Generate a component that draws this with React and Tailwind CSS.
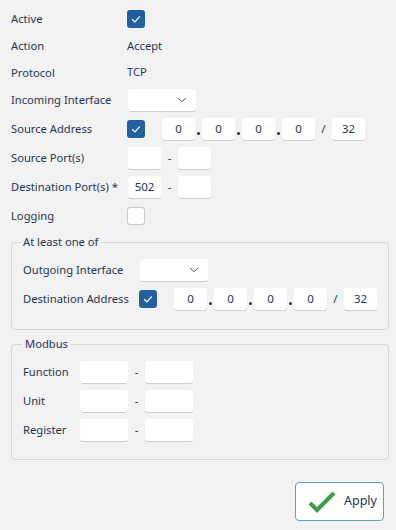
import React from "react";

const font = { fontFamily: '"Noto Sans", "Open Sans", sans-serif' };

function Check({ checked }) {
  return (
    <div
      className={
        "w-[18px] h-[18px] rounded-[3px] flex items-center justify-center shrink-0 " +
        (checked ? "bg-[#22609d]" : "bg-white border border-[#c8c8c8]")
      }
    >
      {checked && (
        <svg width="18" height="18" viewBox="0 0 18 18">
          <path d="M5.2 9.3 L7.9 11.9 L12.9 6.4" fill="none" stroke="#ffffff" strokeWidth="1.2" />
        </svg>
      )}
    </div>
  );
}

function Box({ w = "w-[33px]", children }) {
  return (
    <div
      className={
        w +
        " h-[22px] bg-white rounded-[3px] shadow-[0_1px_0_#cfcfcf] flex items-center justify-center text-[11.5px] text-[#1e3553] shrink-0"
      }
    >
      {children}
    </div>
  );
}

function Select() {
  return (
    <div className="w-[68px] h-[22px] bg-white rounded-[3px] shadow-[0_1px_0_#cfcfcf] flex items-center justify-end pr-[9px] shrink-0">
      <svg width="10" height="6" viewBox="0 0 10 6">
        <path d="M1 1 L5 4.6 L9 1" fill="none" stroke="#44546a" strokeWidth="1" />
      </svg>
    </div>
  );
}

function Ip() {
  const Dot = () => (
    <div className="w-[7px] h-[22px] flex items-end justify-center pb-[5px]">
      <div className="w-[3px] h-[3px] rounded-full bg-[#1e3553]" />
    </div>
  );
  return (
    <div className="flex items-center">
      <Box>0</Box>
      <Dot />
      <Box>0</Box>
      <Dot />
      <Box>0</Box>
      <Dot />
      <Box>0</Box>
      <div className="w-[17px] text-center text-[11.5px] text-[#1e3553]">/</div>
      <Box>32</Box>
    </div>
  );
}

function Range({ w = "w-[33px]", a }) {
  return (
    <div className="flex items-center">
      <Box w={w}>{a}</Box>
      <div className="w-[17px] text-center text-[11.5px] text-[#1e3553]">-</div>
      <Box w={w} />
    </div>
  );
}

function Row({ h, label, lw = "w-[116px]", children }) {
  return (
    <div className={"flex items-center " + h}>
      <div className={lw + " shrink-0 text-[11.2px] text-[#1e3553] whitespace-nowrap pt-[1px]"}>{label}</div>
      {children}
    </div>
  );
}

export default function App() {
  return (
    <div className="w-[396px] h-[530px] bg-[#f2f2f2] overflow-hidden" style={font}>
      <div className="pt-[5px] pl-[11px] pr-[7px]">
        <Row h="h-[28px]" label="Active">
          <Check checked />
        </Row>
        <Row h="h-[26px]" label="Action">
          <span className="text-[11.2px] text-[#1e3553]">Accept</span>
        </Row>
        <Row h="h-[27px]" label="Protocol">
          <span className="text-[11.2px] text-[#1e3553]">TCP</span>
        </Row>
        <Row h="h-[28px]" label="Incoming Interface">
          <div className="pl-[1px]"><Select /></div>
        </Row>
        <Row h="h-[29px]" label="Source Address">
          <Check checked />
          <div className="ml-[17px]"><Ip /></div>
        </Row>
        <Row h="h-[29px]" label="Source Port(s)">
          <div className="pl-[1px]"><Range /></div>
        </Row>
        <Row h="h-[29px]" label="Destination Port(s) *">
          <div className="pl-[1px]"><Range a="502" /></div>
        </Row>
        <Row h="h-[29px]" label="Logging">
          <Check />
        </Row>

        <fieldset className="mt-[4px] border border-[#d6d6d6] rounded-[4px] pl-[11px] pr-[8px] pb-[15px]">
          <legend className="ml-[-3px] px-[3px] text-[11.2px] text-[#1e3553] leading-[16px]">At least one of</legend>
          <div className="pt-[6px]">
            <Row h="h-[28px]" label="Outgoing Interface">
              <div className="pl-[1px]"><Select /></div>
            </Row>
            <Row h="h-[30px]" label="Destination Address">
              <Check checked />
              <div className="ml-[17px]"><Ip /></div>
            </Row>
          </div>
        </fieldset>

        <fieldset className="mt-[6px] border border-[#d6d6d6] rounded-[4px] pl-[11px] pr-[8px] pb-[15px]">
          <legend className="ml-[-1px] px-[3px] text-[11.2px] text-[#1e3553] leading-[16px]">Modbus</legend>
          <div className="pt-[5px]">
            <Row h="h-[29px]" lw="w-[57px]" label="Function">
              <Range w="w-[48px]" />
            </Row>
            <Row h="h-[29px]" lw="w-[57px]" label="Unit">
              <Range w="w-[48px]" />
            </Row>
            <Row h="h-[29px]" lw="w-[57px]" label="Register">
              <Range w="w-[48px]" />
            </Row>
          </div>
        </fieldset>

        <div className="flex justify-end mt-[22px] pr-[5px]">
          <button className="w-[89px] h-[39px] bg-white border border-[#5aa0cc] rounded-[4px] flex items-center pl-[12px] gap-[8px]">
            <svg width="28" height="22" viewBox="0 0 28 22">
              <path d="M2 12 L9 19 L26 2" fill="none" stroke="#3d9e4b" strokeWidth="4.2" strokeLinejoin="miter" />
            </svg>
            <span className="text-[12.5px] text-[#1e3553]">Apply</span>
          </button>
        </div>
      </div>
    </div>
  );
}
